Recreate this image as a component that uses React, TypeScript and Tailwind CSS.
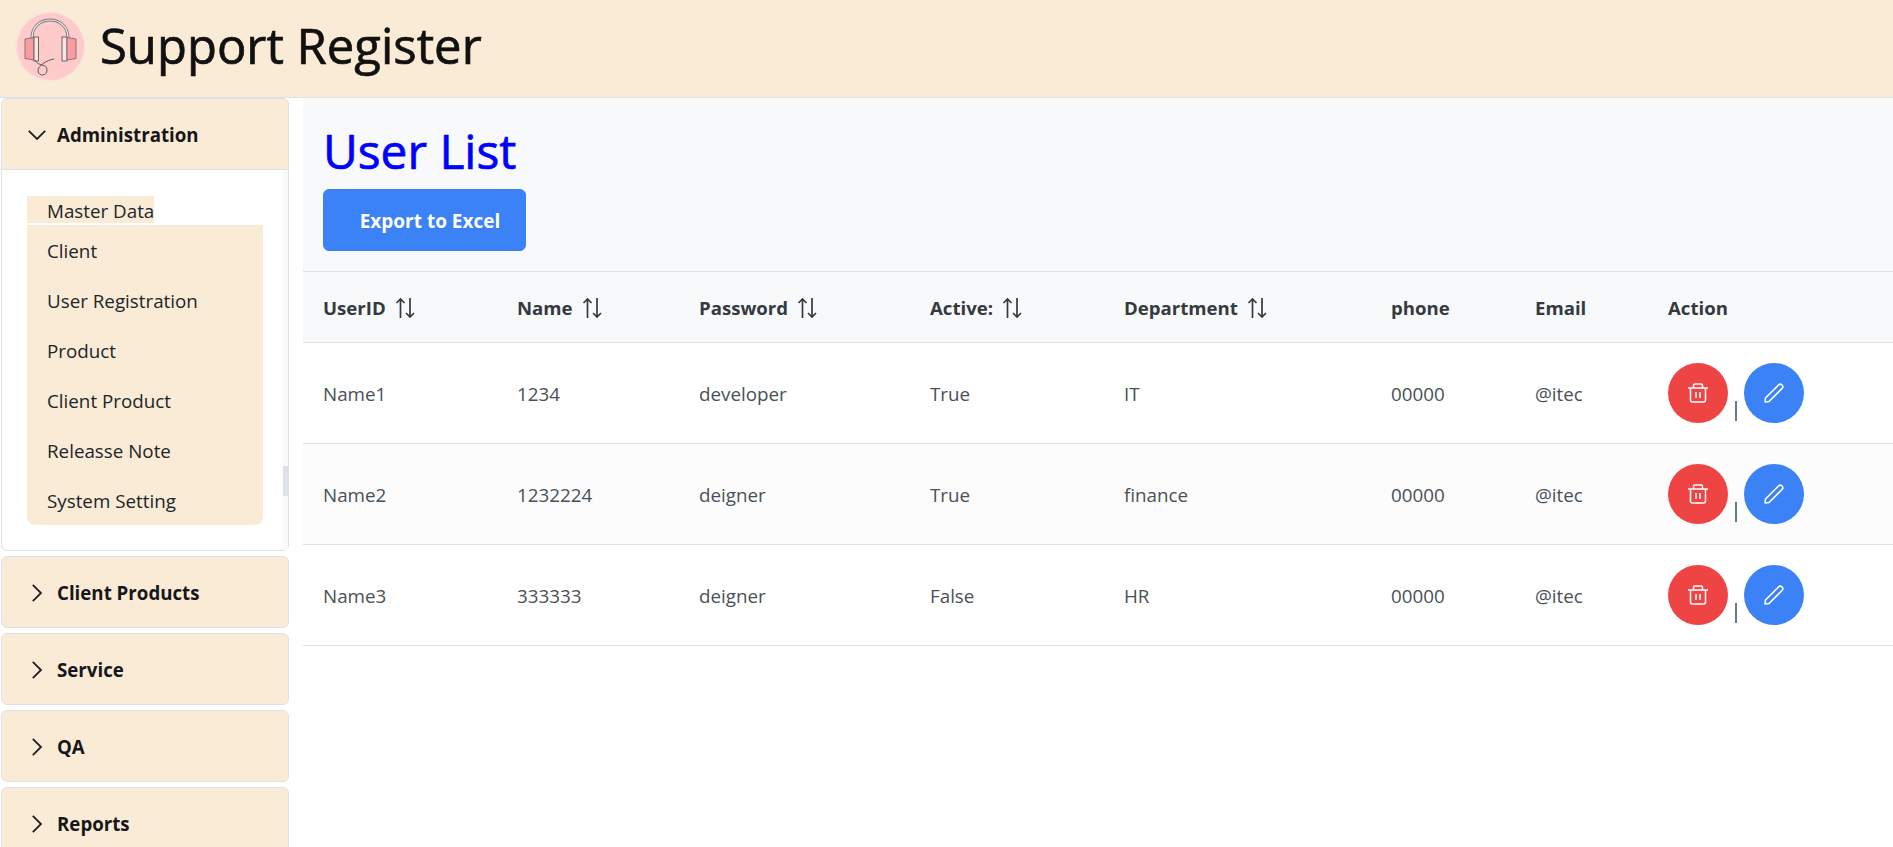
const cream = 'bg-[#faebd7]';

function Logo() {
  return (
    <svg width="72" height="72" viewBox="0 0 72 72" className="shrink-0">
      <circle cx="36" cy="36.5" r="35" fill="#f9e3dc" />
      <circle cx="36.5" cy="36.5" r="33.5" fill="#fecaca" />
      <g transform="translate(0 1)">
        <path d="M18 27 C18 3 54 3 54 27" fill="none" stroke="#77757a" strokeWidth="3" />
        <path d="M18 27 C18 3 54 3 54 27" fill="none" stroke="#f3eeee" strokeWidth="1.2" />
        <path d="M11 28 L20 26.5 V49 L11 47.5 Z" fill="#fc9ca2" stroke="#6b6567" strokeWidth="0.8" />
        <rect x="20" y="26" width="4.5" height="24" fill="#f8e4e4" stroke="#5f5a5c" strokeWidth="0.9" />
        <rect x="48" y="26" width="5" height="24" fill="#f8e4e4" stroke="#5f5a5c" strokeWidth="0.9" />
        <path d="M53 26.5 L62 28 V47.5 L53 49 Z" fill="#fc9ca2" stroke="#6b6567" strokeWidth="0.8" />
        <path d="M21 49 C24 56 33 52 33 59 C33 65 25 66 24 60 C23.5 55 33 49 40 48" fill="none" stroke="#5f5a5c" strokeWidth="1" />
      </g>
    </svg>
  );
}

function Chevron({ open }: { open?: boolean }) {
  return (
    <svg width="18" height="18" viewBox="0 0 18 18" fill="none" stroke="#1f2023" strokeWidth="1.8" className="shrink-0">
      {open ? <path d="M0.8 4.8 L9 13 L17.2 4.8" /> : <path d="M4.8 0.8 L13 9 L4.8 17.2" />}
    </svg>
  );
}

function SortIcon() {
  return (
    <svg width="21" height="22" viewBox="0 0 21 22" fill="none" stroke="#343a40" strokeWidth="1.7" className="shrink-0">
      <path d="M5.5 21 V2 M1.5 6 L5.5 2 L9.5 6" />
      <path d="M15 1 V20 M11 16 L15 20 L19 16" />
    </svg>
  );
}

function TrashIcon() {
  return (
    <svg width="20" height="20" viewBox="0 0 20 20" fill="none" stroke="#ffffff" strokeWidth="1.5">
      <path d="M0 5 H20" />
      <path d="M5.5 5 V2.5 A1.5 1.5 0 0 1 7 1 H13 A1.5 1.5 0 0 1 14.5 2.5 V5" />
      <path d="M2.5 5 V17 A2 2 0 0 0 4.5 19 H15.5 A2 2 0 0 0 17.5 17 V5" />
      <path d="M8 9 V15 M12 9 V15" />
    </svg>
  );
}

function PencilIcon() {
  return (
    <svg width="20" height="20" viewBox="0 0 20 20" fill="none" stroke="#ffffff" strokeWidth="1.6" strokeLinejoin="round">
      <path d="M1 19 L1.5 15 L14.5 2 A2.4 2.4 0 0 1 18 5.5 L5 18.5 Z" />
    </svg>
  );
}

function AccordionHead({ label, open }: { label: string; open?: boolean }) {
  return (
    <div className={`flex h-[72px] items-center gap-[11px] border border-[#dee2e6] pl-[26px] pt-[2px] ${cream} ${open ? 'rounded-t-md' : 'rounded-md'}`}>
      <Chevron open={open} />
      <span className="text-[18.7px] font-bold text-[#17171a]">{label}</span>
    </div>
  );
}

const menu = ['Client', 'User Registration', 'Product', 'Client Product', 'Releasse Note', 'System Setting'];

function Sidebar() {
  return (
    <aside className="flex w-[303px] shrink-0 flex-col bg-white pl-[1px]">
      <div className="w-[288px]">
        <AccordionHead label="Administration" open />
        <div className="relative h-[381px] rounded-b-md border border-t-0 border-[#dee2e6] bg-white pl-[25px] pt-[26px]">
          <div className={`h-[27px] w-[127px] whitespace-nowrap pl-[20px] text-[18.8px] leading-[30px] text-[#212529] ${cream}`}>Master Data</div>
          <ul className={`mt-[2px] w-[236px] rounded-b-lg pl-[20px] ${cream}`}>
            {menu.map(item => (
              <li key={item} className="flex h-[50px] items-center pt-[2px] text-[18.8px] text-[#212529]">{item}</li>
            ))}
          </ul>
          <div className="absolute right-0 top-0 h-full w-[5px] bg-[#f8f9fa]">
            <div className="mt-[296px] h-[30px] w-full bg-[#dee2e6]" />
          </div>
        </div>
        <div className="mt-[5px] flex flex-col gap-[5px]">
          {['Client Products', 'Service', 'QA', 'Reports'].map(label => (
            <AccordionHead key={label} label={label} />
          ))}
        </div>
      </div>
    </aside>
  );
}

const columns = [
  { label: 'UserID', width: 'w-[194px]', sort: true },
  { label: 'Name', width: 'w-[182px]', sort: true },
  { label: 'Password', width: 'w-[231px]', sort: true },
  { label: 'Active:', width: 'w-[194px]', sort: true },
  { label: 'Department', width: 'w-[267px]', sort: true },
  { label: 'phone', width: 'w-[144px]', sort: false },
  { label: 'Email', width: 'w-[133px]', sort: false },
  { label: 'Action', width: '', sort: false },
];

const rows = [
  ['Name1', '1234', 'developer', 'True', 'IT', '00000', '@itec'],
  ['Name2', '1232224', 'deigner', 'True', 'finance', '00000', '@itec'],
  ['Name3', '333333', 'deigner', 'False', 'HR', '00000', '@itec'],
];

function UserTable() {
  return (
    <table className="w-full table-fixed border-collapse">
      <thead>
        <tr className="h-[71px] border-y border-[#dee2e6] bg-[#f8f9fa]">
          {columns.map(col => (
            <th key={col.label} className={`px-[20px] pt-[2px] text-left text-[18.6px] font-bold text-[#343a40] ${col.width}`}>
              <span className="flex items-center gap-[9px]">
                {col.label}
                {col.sort && <SortIcon />}
              </span>
            </th>
          ))}
        </tr>
      </thead>
      <tbody>
        {rows.map((row, i) => (
          <tr key={row[0]} className={`h-[101px] border-b border-[#dee2e6] ${i % 2 === 1 ? 'bg-[#fcfcfc]' : 'bg-white'}`}>
            {row.map((cell, j) => (
              <td key={j} className="px-[20px] pt-[2px] text-[18.8px] text-[#495057]">{cell}</td>
            ))}
            <td className="px-[20px]">
              <div className="flex items-end gap-[7px]">
                <button className="flex h-[60px] w-[60px] items-center justify-center rounded-full bg-[#ef4444]"><TrashIcon /></button>
                <span className="mb-[2px] h-[20px] w-[2px] bg-[#5f7f85]" />
                <button className="flex h-[60px] w-[60px] items-center justify-center rounded-full bg-[#3b82f6]"><PencilIcon /></button>
              </div>
            </td>
          </tr>
        ))}
      </tbody>
    </table>
  );
}

export default function App() {
  return (
    <div className="flex h-[847px] flex-col overflow-hidden bg-white font-['Open_Sans','Noto_Sans',sans-serif]">
      <header className={`flex h-[98px] shrink-0 items-center gap-[14px] border-b border-[#dee2e6] pl-[14px] pb-[6px] ${cream}`}>
        <Logo />
        <h1 className="text-[49px] font-normal leading-none text-[#111111] [-webkit-text-stroke:0.7px_#111111]">Support Register</h1>
      </header>
      <div className="flex min-h-0 flex-1">
        <Sidebar />
        <main className="min-w-0 flex-1">
          <div className="h-[173px] bg-[#f8f9fa] pl-[20px] pt-[18px]">
            <h2 className="text-[47.8px] font-normal leading-[70px] text-[#0000ff] [-webkit-text-stroke:0.7px_#0000ff]">User List</h2>
            <button className="mt-[3px] h-[62px] w-[203px] rounded-md border border-[#3b82f6] bg-[#3b82f6] pl-[11px] pt-[2px] text-[19px] font-bold text-white">Export to Excel</button>
          </div>
          <UserTable />
        </main>
      </div>
    </div>
  );
}
